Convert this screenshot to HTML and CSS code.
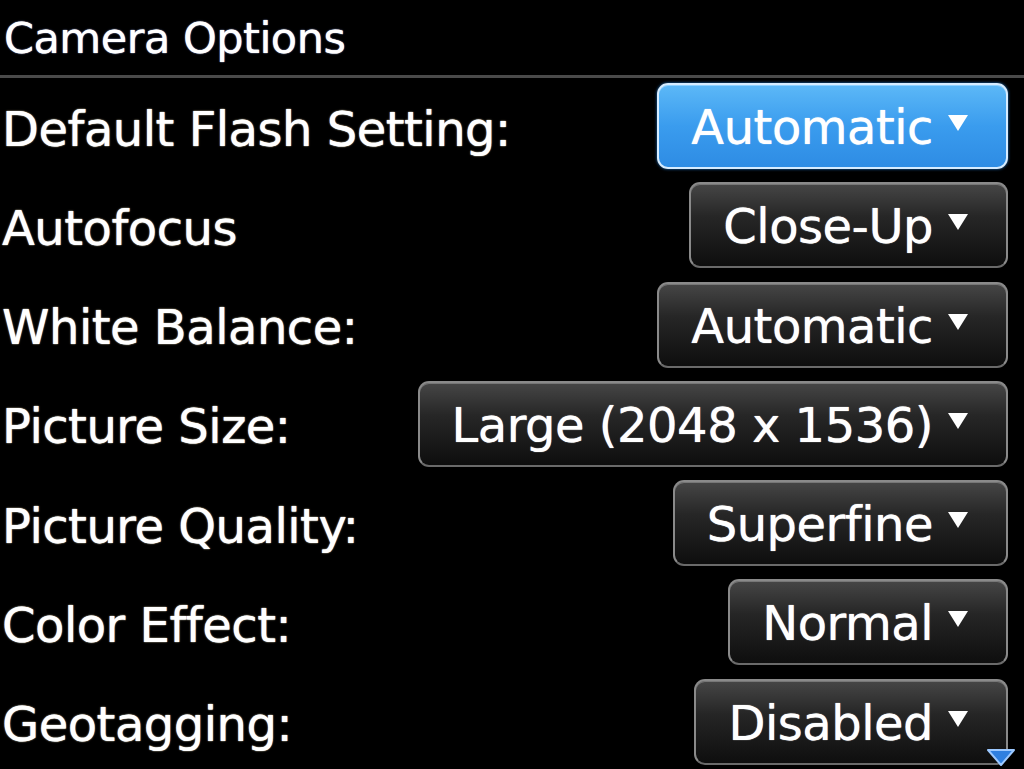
FILE: index.html
```html
<!DOCTYPE html>
<html>
<head>
  <title>Camera Options</title>
  <link rel="stylesheet" href="styles.css">
</head>
<body>

<div class="screen">
  <div class="title-bar">
    <h1>Camera Options</h1>
  </div>

  <div class="options">
    <div class="option-row">
      <span class="label">Default Flash Setting:</span>
      <div class="choice selected">Automatic <span class="arrow"></span></div>
    </div>
    <div class="option-row">
      <span class="label">Autofocus</span>
      <div class="choice">Close-Up <span class="arrow"></span></div>
    </div>
    <div class="option-row">
      <span class="label">White Balance:</span>
      <div class="choice">Automatic <span class="arrow"></span></div>
    </div>
    <div class="option-row">
      <span class="label">Picture Size:</span>
      <div class="choice">Large (2048 x 1536) <span class="arrow"></span></div>
    </div>
    <div class="option-row">
      <span class="label">Picture Quality:</span>
      <div class="choice">Superfine <span class="arrow"></span></div>
    </div>
    <div class="option-row">
      <span class="label">Color Effect:</span>
      <div class="choice">Normal <span class="arrow"></span></div>
    </div>
    <div class="option-row">
      <span class="label">Geotagging:</span>
      <div class="choice">Disabled <span class="arrow"></span></div>
    </div>
  </div>

  <svg class="scroll-hint" width="30" height="20" viewBox="0 0 30 20">
    <path d="M2 3 L28 3 L15 18 Z" fill="#2f7fe0" stroke="#9cc8ff" stroke-width="2" stroke-linejoin="round"/>
  </svg>
</div>

</body>
</html>
```

FILE: styles.css
```css
body {
  margin: 0;
  background-color: #000;
  color: #fff;
  font-family: "DejaVu Sans", sans-serif;
  overflow: hidden;
}

.screen {
  position: relative;
  width: 1024px;
  height: 769px;
}

.title-bar {
  height: 75px;
  border-bottom: 3px solid #4a4a4a;
  display: flex;
  align-items: center;
  padding-left: 4px;
}

.title-bar h1 {
  margin: 0;
  font-size: 43px;
  font-weight: normal;
  letter-spacing: -0.5px;
  text-shadow: 0 0 1px #fff, 0 0 2px rgba(120, 150, 255, 0.5);
}

.options {
  padding: 5px 16px 0 2px;
}

.option-row {
  height: 86px;
  margin-bottom: 13.3px;
  display: flex;
  align-items: center;
  justify-content: space-between;
}

.label {
  padding-top: 5px;
  font-size: 48px;
  letter-spacing: -0.5px;
  text-shadow: 0 0 1px #fff, 0 0 2px rgba(255, 240, 180, 0.5);
}

.choice {
  box-sizing: border-box;
  height: 86px;
  display: flex;
  align-items: center;
  padding: 2px 38px 0 32px;
  font-size: 48px;
  letter-spacing: -0.5px;
  text-shadow: 0 0 1px #fff;
  border: 2px solid #8a8a8a;
  border-bottom-color: #6a6a6a;
  border-radius: 11px;
  background: linear-gradient(#464646, #262626 40%, #0e0e0e);
  box-shadow: inset 0 1px 0 #777;
}

.choice.selected {
  border-color: #d6ecff;
  background: linear-gradient(#5cb8f7, #3a9cee 50%, #2e8ce4);
  box-shadow: 0 0 3px #1d74c8, inset 0 1px 0 #8fd0ff;
}

.arrow {
  margin-left: 15px;
  margin-top: -8px;
  width: 0;
  height: 0;
  border-left: 10px solid transparent;
  border-right: 10px solid transparent;
  border-top: 16px solid #fff;
}

.scroll-hint {
  position: absolute;
  right: 8px;
  bottom: 2px;
}
```
